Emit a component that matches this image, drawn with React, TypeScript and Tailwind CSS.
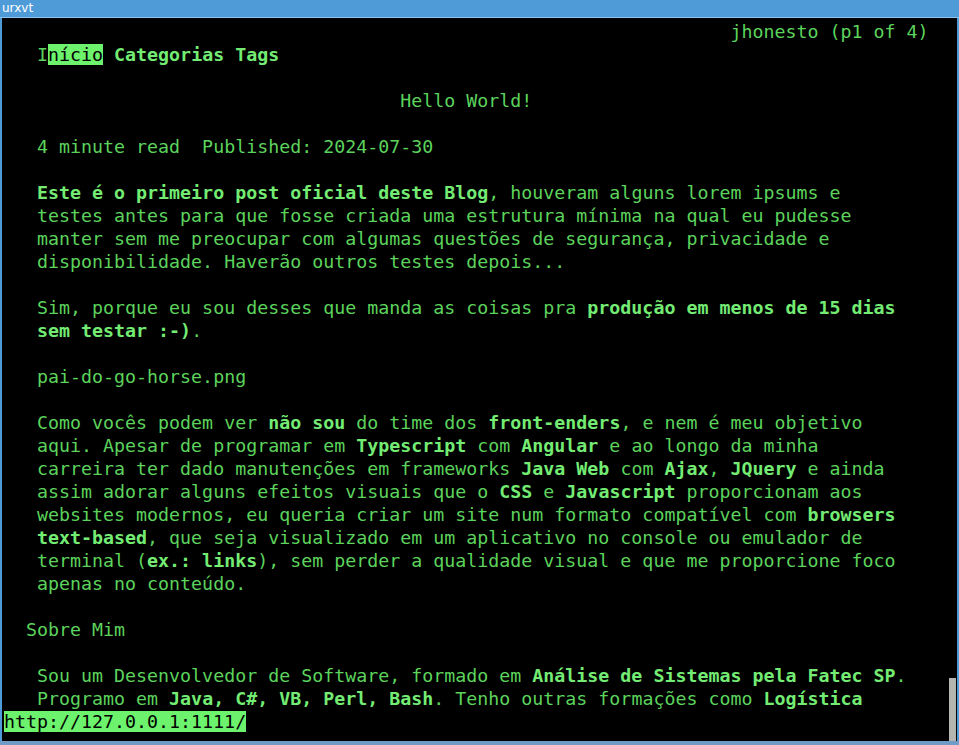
type Seg = { t: string; b?: boolean; hl?: boolean };
type Line = { col?: number; segs: Seg[] };

const r = (t: string): Seg => ({ t });
const b = (t: string): Seg => ({ t, b: true });

const lines: Line[] = [
  { col: 66, segs: [r("jhonesto (p1 of 4)")] },
  { col: 3, segs: [r("I"), { t: "nício", hl: true }, b(" Categorias Tags")] },
  { segs: [] },
  { col: 36, segs: [r("Hello World!")] },
  { segs: [] },
  { col: 3, segs: [r("4 minute read  Published: 2024-07-30")] },
  { segs: [] },
  { col: 3, segs: [b("Este é o primeiro post oficial deste Blog"), r(", houveram alguns lorem ipsums e")] },
  { col: 3, segs: [r("testes antes para que fosse criada uma estrutura mínima na qual eu pudesse")] },
  { col: 3, segs: [r("manter sem me preocupar com algumas questões de segurança, privacidade e")] },
  { col: 3, segs: [r("disponibilidade. Haverão outros testes depois...")] },
  { segs: [] },
  { col: 3, segs: [r("Sim, porque eu sou desses que manda as coisas pra "), b("produção em menos de 15 dias")] },
  { col: 3, segs: [b("sem testar :-)"), r(".")] },
  { segs: [] },
  { col: 3, segs: [r("pai-do-go-horse.png")] },
  { segs: [] },
  { col: 3, segs: [r("Como vocês podem ver "), b("não sou"), r(" do time dos "), b("front-enders"), r(", e nem é meu objetivo")] },
  { col: 3, segs: [r("aqui. Apesar de programar em "), b("Typescript"), r(" com "), b("Angular"), r(" e ao longo da minha")] },
  { col: 3, segs: [r("carreira ter dado manutenções em frameworks "), b("Java Web"), r(" com "), b("Ajax"), r(", "), b("JQuery"), r(" e ainda")] },
  { col: 3, segs: [r("assim adorar alguns efeitos visuais que o "), b("CSS"), r(" e "), b("Javascript"), r(" proporcionam aos")] },
  { col: 3, segs: [r("websites modernos, eu queria criar um site num formato compatível com "), b("browsers")] },
  { col: 3, segs: [b("text-based"), r(", que seja visualizado em um aplicativo no console ou emulador de")] },
  { col: 3, segs: [r("terminal ("), b("ex.: links"), r("), sem perder a qualidade visual e que me proporcione foco")] },
  { col: 3, segs: [r("apenas no conteúdo.")] },
  { segs: [] },
  { col: 2, segs: [r("Sobre Mim")] },
  { segs: [] },
  { col: 3, segs: [r("Sou um Desenvolvedor de Software, formado em "), b("Análise de Sistemas pela Fatec SP"), r(".")] },
  { col: 3, segs: [r("Programo em "), b("Java, C#, VB, Perl, Bash"), r(". Tenho outras formações como "), b("Logística")] },
];

function TermLine({ line }: { line: Line }) {
  return (
    <div className="h-[23px] leading-[23px] whitespace-pre">
      {" ".repeat(line.col ?? 0)}
      {line.segs.map((s, i) => (
        <span
          key={i}
          className={
            s.hl
              ? "bg-[#6cf26c] text-black"
              : s.b
                ? "font-bold text-[#74ec74]"
                : "text-[#5cd35c]"
          }
        >
          {s.t}
        </span>
      ))}
    </div>
  );
}

export default function App() {
  return (
    <div className="w-[959px] h-[745px] flex flex-col bg-[#4f9bd8] overflow-hidden">
      <div className="h-[17px] px-[2px] text-[12px] leading-[16px] text-white font-['DejaVu_Sans',sans-serif]">
        urxvt
      </div>
      <div className="h-px bg-[#8cc3ee]" />
      <div className="flex flex-1 pl-[2px] pr-[2px]">
        <div className="flex flex-1 bg-black">
          <div className="flex-1 pl-[2px] pt-[2px] text-[18.3px] font-['DejaVu_Sans_Mono',monospace]">
            {lines.map((l, i) => (
              <TermLine key={i} line={l} />
            ))}
            <div className="h-[23px] leading-[23px] whitespace-pre">
              <span className="bg-[#6cf26c] text-black">http://127.0.0.1:1111/</span>
            </div>
          </div>
          <div className="w-[7px] mr-px flex flex-col justify-end">
            <div className="h-[63px] bg-[#b4b4b0]" />
          </div>
        </div>
      </div>
      <div className="h-[4px] bg-[#6f9cc6]" />
    </div>
  );
}
